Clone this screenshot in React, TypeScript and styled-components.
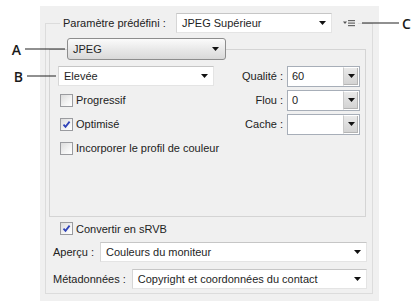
import React from 'react';
import styled, { createGlobalStyle } from 'styled-components';

const Global = createGlobalStyle`
  html, body { margin: 0; padding: 0; background: #ffffff; }
  body { font-family: "Liberation Sans", Arial, sans-serif; font-size: 11px; color: #222222; }
  * { box-sizing: border-box; }
`;

const Page = styled.div`
  width: 415px;
  height: 301px;
  overflow: hidden;
  background: #ffffff;
  padding: 6px 0 0 40px;
`;

const Panel = styled.div`
  width: 339px;
  height: 295px;
  background: #f0f0f0;
  padding: 7px 6px 0 5px;
`;

const Group = styled.fieldset`
  margin: 0;
  min-width: 0;
  width: 328px;
  border: 1px solid #dcdcdc;
  padding: 0 6px 4px 3px;
`;

const GroupLegend = styled.legend`
  margin-left: 11px;
  padding: 0 3px;
  height: 20px;
  display: flex;
  align-items: center;
`;

const PresetLabel = styled.span`
  width: 113px;
  white-space: nowrap;
`;

const JpegBox = styled.fieldset`
  margin: 5px 0 0 0;
  min-width: 0;
  border: 1px solid #d4d4d4;
  padding: 4px 5px 56px 5px;
`;

const JpegLegend = styled.legend`
  margin-left: 12px;
  padding: 0;
`;

const CalloutWrap = styled.div`
  position: relative;
`;

const Callout = styled.span<{ $side: 'left' | 'right' }>`
  position: absolute;
  top: 50%;
  transform: translateY(-50%);
  display: flex;
  align-items: center;
  gap: 4px;
  font: 600 14px "Open Sans", "Liberation Sans", sans-serif;
  color: #1a1a1a;
  white-space: nowrap;
  ${p => (p.$side === 'left' ? 'right: calc(100% + 2px);' : 'left: calc(100% + 7px); gap: 3px;')}
`;

const CalloutLine = styled.span<{ $len: number }>`
  display: block;
  width: ${p => p.$len}px;
  height: 1px;
  background: #222222;
`;

const Select = styled.div<{ $w?: number }>`
  position: relative;
  ${p => (p.$w ? `width: ${p.$w}px;` : 'flex: 1;')}
  height: 20px;
  background: #ffffff;
  border: 1px solid #e4e4e4;
  border-top-color: #c6c6c6;
  border-left-color: #d6d6d6;
  display: flex;
  align-items: center;
  padding: 0 5px 0 5px;
  white-space: nowrap;
  color: #1e1e1e;
`;

const ButtonSelect = styled.div`
  width: 159px;
  height: 22px;
  border: 1px solid #8d8d8d;
  border-radius: 3px;
  background: linear-gradient(#fbfbfb, #e9e9e9 50%, #d9d9d9);
  display: flex;
  align-items: center;
  padding: 0 6px 0 5px;
  color: #1e1e1e;
`;

const ArrowIcon = styled.svg`
  margin-left: auto;
  flex: none;
`;

const MenuIcon = styled.svg`
  margin-left: 11px;
  flex: none;
  display: block;
`;

const Grid = styled.div`
  display: grid;
  grid-template-columns: 1fr auto;
  grid-auto-rows: 24px;
  align-items: center;
`;

const LeftCell = styled.div<{ $indent: number }>`
  padding-left: ${p => p.$indent}px;
  display: flex;
  align-items: center;
`;

const RightCell = styled.div`
  display: flex;
  align-items: center;
  justify-content: flex-end;
  gap: 4px;
`;

const FieldLabel = styled.span`
  white-space: nowrap;
`;

const Combo = styled.div`
  width: 73px;
  height: 21px;
  background: #ffffff;
  border: 1px solid #a7aeb8;
  display: flex;
  align-items: stretch;
`;

const ComboValue = styled.span`
  flex: 1;
  padding-left: 4px;
  display: flex;
  align-items: center;
`;

const ComboButton = styled.span`
  width: 16px;
  border: 1px solid #ffffff;
  border-left: 1px solid #c9c9c9;
  background: linear-gradient(#e9e9e9, #d2d2d2);
  box-shadow: inset -1px -1px 0 #b4b4b4;
  display: flex;
  align-items: center;
  justify-content: center;
`;

const CheckRow = styled.label<{ $indent: number }>`
  display: flex;
  align-items: center;
  gap: 3px;
  padding-left: ${p => p.$indent}px;
  white-space: nowrap;
  height: 23px;
`;

const Box = styled.span`
  width: 13px;
  height: 13px;
  flex: none;
  border: 1px solid #9a9b9f;
  background: linear-gradient(135deg, #dcdcdc, #f4f4f4 60%, #ffffff);
  display: flex;
  align-items: center;
  justify-content: center;
`;

const FormRow = styled.div<{ $top: number }>`
  display: flex;
  align-items: center;
  gap: 6px;
  padding-left: 4px;
  margin-top: ${p => p.$top}px;
  margin-right: -1px;
`;

const Arrow = ({ w = 7 }: { w?: number }) => (
  <ArrowIcon width={w} height={4} viewBox={`0 0 ${w} 4`}>
    <polygon points={`0,0 ${w},0 ${w / 2},4`} fill="#111" />
  </ArrowIcon>
);

const Check = ({ on }: { on?: boolean }) => (
  <Box>
    {on && (
      <svg width="9" height="9" viewBox="0 0 9 9">
        <path d="M1.5 4.6 L3.5 6.8 L7.6 1.6" stroke="#3043b8" strokeWidth="1.8" fill="none" />
      </svg>
    )}
  </Box>
);

const ComboBox = ({ value }: { value: string }) => (
  <Combo>
    <ComboValue>{value}</ComboValue>
    <ComboButton>
      <svg width="7" height="4" viewBox="0 0 7 4">
        <polygon points="0,0 7,0 3.5,4" fill="#111" />
      </svg>
    </ComboButton>
  </Combo>
);

export default function App() {
  return (
    <Page>
      <Global />
      <Panel>
        <Group>
          <GroupLegend>
            <PresetLabel>Paramètre prédéfini :</PresetLabel>
            <Select $w={156}>
              JPEG Supérieur
              <Arrow />
            </Select>
            <CalloutWrap>
              <MenuIcon width="12" height="8" viewBox="0 0 12 8">
                <polygon points="0,2.5 4,2.5 2,5" fill="#555" />
                <rect x="5" y="1" width="7" height="1.2" fill="#666" />
                <rect x="5" y="3.5" width="7" height="1.2" fill="#666" />
                <rect x="5" y="6" width="7" height="1.2" fill="#666" />
              </MenuIcon>
              <Callout $side="right">
                <CalloutLine $len={37} />C
              </Callout>
            </CalloutWrap>
          </GroupLegend>

          <JpegBox>
            <JpegLegend>
              <CalloutWrap>
                <Callout $side="left">
                  A<CalloutLine $len={40} />
                </Callout>
                <ButtonSelect>
                  JPEG
                  <Arrow />
                </ButtonSelect>
              </CalloutWrap>
            </JpegLegend>
            <Grid>
              <LeftCell $indent={3}>
                <CalloutWrap>
                  <Callout $side="left">
                    B<CalloutLine $len={29} />
                  </Callout>
                  <Select $w={156}>
                    Elevée
                    <Arrow />
                  </Select>
                </CalloutWrap>
              </LeftCell>
              <RightCell>
                <FieldLabel>Qualité :</FieldLabel>
                <ComboBox value="60" />
              </RightCell>
              <CheckRow $indent={5}>
                <Check />
                Progressif
              </CheckRow>
              <RightCell>
                <FieldLabel>Flou :</FieldLabel>
                <ComboBox value="0" />
              </RightCell>
              <CheckRow $indent={5}>
                <Check on />
                Optimisé
              </CheckRow>
              <RightCell>
                <FieldLabel>Cache :</FieldLabel>
                <ComboBox value="" />
              </RightCell>
              <CheckRow $indent={5}>
                <Check />
                Incorporer le profil de couleur
              </CheckRow>
              <RightCell />
            </Grid>
          </JpegBox>

          <CheckRow $indent={11}>
            <Check on />
            Convertir en sRVB
          </CheckRow>
          <FormRow $top={2}>
            <FieldLabel>Aperçu :</FieldLabel>
            <Select>
              Couleurs du moniteur
              <Arrow />
            </Select>
          </FormRow>
          <FormRow $top={7}>
            <FieldLabel>Métadonnées :</FieldLabel>
            <Select>
              Copyright et coordonnées du contact
              <Arrow />
            </Select>
          </FormRow>
        </Group>
      </Panel>
    </Page>
  );
}
